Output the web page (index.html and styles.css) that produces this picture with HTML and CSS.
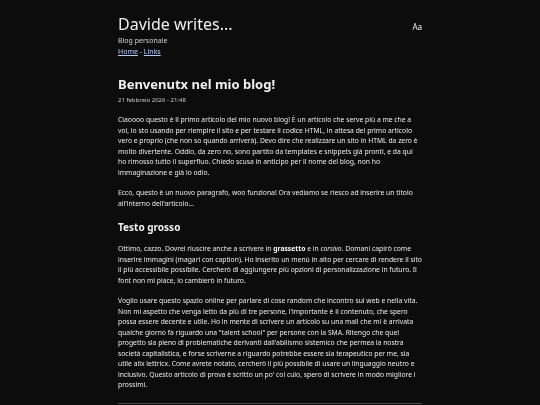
FILE: index.html
```html
<!DOCTYPE html>
<html lang="it">
<head>
<meta charset="utf-8">
<title>Davide writes...</title>
<link rel="stylesheet" href="styles.css">
</head>
<body>
<div class="page">
  <header class="site-header">
    <div class="brand">
      <div class="site-title">Davide writes...</div>
      <div class="subtitle">Blog personale</div>
      <nav class="nav"><a href="#">Home</a> - <a href="#">Links</a></nav>
    </div>
    <button class="font-toggle">Aa</button>
  </header>
  <article class="post">
    <h1 class="post-title">Benvenutx nel mio blog!</h1>
    <div class="post-date">21 febbraio 2026 - 21:48</div>
    <p>Ciaoooo questo è il primo articolo del mio nuovo blog! È un articolo che serve più a me che a voi, lo sto usando per riempire il sito e per testare il codice HTML, in attesa del primo articolo vero e proprio (che non so quando arriverà). Devo dire che realizzare un sito in HTML da zero è molto divertente. Oddio, da zero no, sono partito da templates e snippets già pronti, e da qui ho rimosso tutto il superfluo. Chiedo scusa in anticipo per il nome del blog, non ho immaginazione e già lo odio.</p>
    <p>Ecco, questo è un nuovo paragrafo, woo funziona! Ora vediamo se riesco ad inserire un titolo all'interno dell'articolo...</p>
    <h2 class="section-title">Testo grosso</h2>
    <p>Ottimo, cazzo. Dovrei riuscire anche a scrivere in <strong>grassetto</strong> e in <em>corsivo</em>. Domani capirò come inserire immagini (magari con caption). Ho inserito un menù in alto per cercare di rendere il sito il più accessibile possibile. Cercherò di aggiungere più opzioni di personalizzazione in futuro. Il font non mi piace, lo cambierò in futuro.</p>
    <p>Voglio usare questo spazio online per parlare di cose random che incontro sul web e nella vita. Non mi aspetto che venga letto da più di tre persone, l'importante è il contenuto, che spero possa essere decente e utile. Ho in mente di scrivere un articolo su una mail che mi è arrivata qualche giorno fa riguardo una "talent school" per persone con la SMA. Ritengo che quel progetto sia pieno di problematiche derivanti dall'abilismo sistemico che permea la nostra società capitalistica, e forse scriverne a riguardo potrebbe essere sia terapeutico per me, sia utile allx lettricx. Come avrete notato, cercherò il più possibile di usare un linguaggio neutro e inclusivo. Questo articolo di prova è scritto un po' col culo, spero di scrivere in modo migliore i prossimi.</p>
    <hr class="divider">
  </article>
</div>
</body>
</html>
```
FILE: styles.css
```css
html, body {
  margin: 0;
  padding: 0;
  background: #0c0c0d;
}
body {
  font-family: "Noto Sans", "Open Sans", sans-serif;
  color: #ececec;
  font-size: 6.78px;
  line-height: 10.5px;
}
.page {
  width: 304px;
  margin: 0 auto;
  padding-top: 13px;
  will-change: transform;
}
.site-header {
  display: flex;
  justify-content: space-between;
  align-items: flex-start;
}
.site-title {
  font-size: 16px;
  line-height: 22px;
  color: #f0f0f0;
}
.subtitle {
  font-size: 7px;
  line-height: 11px;
  color: #cfcfcf;
}
.nav {
  font-size: 7px;
  line-height: 11px;
  color: #cfcfcf;
}
.nav a {
  color: #b4cbf7;
}
.font-toggle {
  background: none;
  border: none;
  color: #f4f4f4;
  font-family: inherit;
  font-size: 8px;
  padding: 0;
  margin-top: 8px;
}
.post {
  margin-top: 18px;
}
.post-title {
  font-size: 13px;
  line-height: 18px;
  font-weight: 700;
  margin: 0;
  color: #f0f0f0;
}
.post-date {
  font-size: 6px;
  line-height: 10px;
  color: #c8c8c8;
  margin-top: 2px;
}
.post p {
  margin: 10px 0;
}
.section-title {
  font-size: 10px;
  line-height: 14px;
  font-weight: 700;
  margin: 11px 0 9px;
  color: #f0f0f0;
}
strong {
  color: #ffffff;
}
.divider {
  border: none;
  border-top: 1px solid #4a4a4a;
  margin: 12px 0 0;
}
```
